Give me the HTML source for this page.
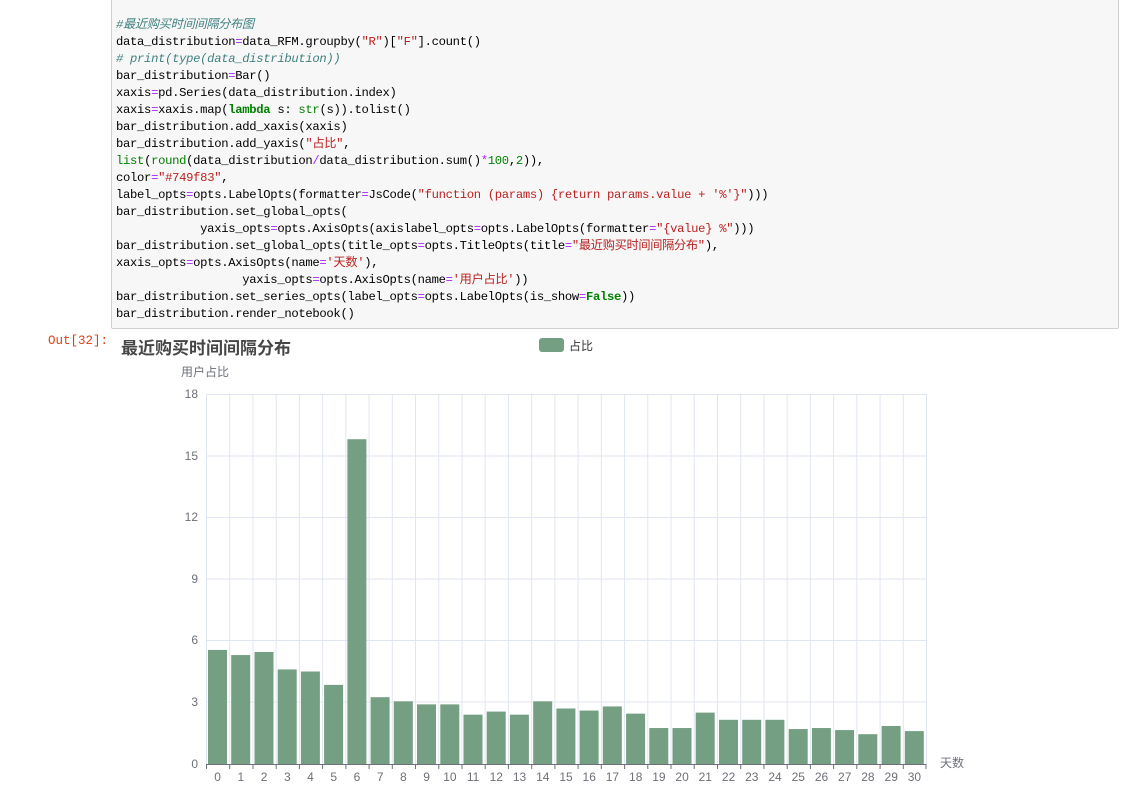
<!DOCTYPE html>
<html><head><meta charset="utf-8"><style>
html,body{margin:0;padding:0;background:#fff;width:1138px;height:807px;overflow:hidden}
.cell{position:absolute;left:111px;top:-1px;width:1006px;height:328px;background:#f7f7f7;border:1px solid #cfcfcf;border-radius:2px}
pre{position:absolute;left:116px;top:17px;margin:0;font-family:"Liberation Mono","Noto Sans CJK SC",monospace;font-size:12.2px;line-height:17px;color:#000;letter-spacing:-0.3px}
.c{color:#408080;font-style:italic}.s{color:#ba2121}.k{color:#008000;font-weight:bold}.o{color:#aa22ff}.n{color:#008000}
.out{position:absolute;left:48px;top:334px;font-family:"Liberation Mono",monospace;font-size:12.5px;color:#d84315}
svg{position:absolute;left:0;top:0}
</style></head><body>
<div class="cell"></div>
<pre><span class="c">#最近购买时间间隔分布图</span>
data_distribution<span class="o">=</span>data_RFM.groupby(<span class="s">"R"</span>)[<span class="s">"F"</span>].count()
<span class="c"># print(type(data_distribution))</span>
bar_distribution<span class="o">=</span>Bar()
xaxis<span class="o">=</span>pd.Series(data_distribution.index)
xaxis<span class="o">=</span>xaxis.map(<span class="k">lambda</span> s: <span class="n">str</span>(s)).tolist()
bar_distribution.add_xaxis(xaxis)
bar_distribution.add_yaxis(<span class="s">"占比"</span>,
<span class="n">list</span>(<span class="n">round</span>(data_distribution<span class="o">/</span>data_distribution.sum()<span class="o">*</span><span class="n">100</span>,<span class="n">2</span>)),
color<span class="o">=</span><span class="s">"#749f83"</span>,
label_opts<span class="o">=</span>opts.LabelOpts(formatter<span class="o">=</span>JsCode(<span class="s">"function (params) {return params.value + '%'}"</span>)))
bar_distribution.set_global_opts(
            yaxis_opts<span class="o">=</span>opts.AxisOpts(axislabel_opts<span class="o">=</span>opts.LabelOpts(formatter<span class="o">=</span><span class="s">"{value} %"</span>)))
bar_distribution.set_global_opts(title_opts<span class="o">=</span>opts.TitleOpts(title<span class="o">=</span><span class="s">"最近购买时间间隔分布"</span>),
xaxis_opts<span class="o">=</span>opts.AxisOpts(name<span class="o">=</span><span class="s">'天数'</span>),
                  yaxis_opts<span class="o">=</span>opts.AxisOpts(name<span class="o">=</span><span class="s">'用户占比'</span>))
bar_distribution.set_series_opts(label_opts<span class="o">=</span>opts.LabelOpts(is_show<span class="o">=</span><span class="k">False</span>))
bar_distribution.render_notebook()</pre>
<div class="out">Out[32]:</div>
<svg width="1138" height="807" font-family="Liberation Sans,Noto Sans CJK SC,sans-serif">
<defs><pattern id="vg" x="206" y="0" width="23.226" height="807" patternUnits="userSpaceOnUse"><line x1="0.5" y1="0" x2="0.5" y2="807" stroke="#e0e6f1" stroke-width="1"/></pattern></defs>
<text x="121" y="354" font-size="17" font-weight="bold" fill="#464646">最近购买时间间隔分布</text>
<rect x="539" y="338" width="25" height="14" rx="3" fill="#749f83"/>
<text x="569" y="350" font-size="12" fill="#333">占比</text>
<text x="181" y="376" font-size="12" fill="#6e7079">用户占比</text>
<text x="940" y="767" font-size="12" fill="#6e7079">天数</text>
<rect x="206" y="394" width="721" height="370" fill="url(#vg)"/>
<g stroke="#e0e6f1" stroke-width="1">
<line x1="206" y1="394.5" x2="926" y2="394.5"/><line x1="206" y1="456" x2="926" y2="456"/><line x1="206" y1="517.5" x2="926" y2="517.5"/><line x1="206" y1="579" x2="926" y2="579"/><line x1="206" y1="640.5" x2="926" y2="640.5"/><line x1="206" y1="702" x2="926" y2="702"/>
</g>
<g font-size="12" fill="#6e7079" text-anchor="end">
<text x="198" y="398">18</text><text x="198" y="460">15</text><text x="198" y="521">12</text><text x="198" y="583">9</text><text x="198" y="644">6</text><text x="198" y="706">3</text><text x="198" y="768">0</text>
</g>
<g transform="translate(0,764) scale(1,-20.556)" fill="#749f83">
<rect x="208" y="0" width="19" height="5.55"/><rect x="231.2" y="0" width="19" height="5.3"/><rect x="254.5" y="0" width="19" height="5.45"/><rect x="277.7" y="0" width="19" height="4.6"/><rect x="300.9" y="0" width="19" height="4.5"/><rect x="324.1" y="0" width="19" height="3.85"/><rect x="347.4" y="0" width="19" height="15.8"/><rect x="370.6" y="0" width="19" height="3.25"/><rect x="393.8" y="0" width="19" height="3.05"/><rect x="417" y="0" width="19" height="2.9"/><rect x="440.3" y="0" width="19" height="2.9"/><rect x="463.5" y="0" width="19" height="2.4"/><rect x="486.7" y="0" width="19" height="2.55"/><rect x="509.9" y="0" width="19" height="2.4"/><rect x="533.2" y="0" width="19" height="3.05"/><rect x="556.4" y="0" width="19" height="2.7"/><rect x="579.6" y="0" width="19" height="2.6"/><rect x="602.8" y="0" width="19" height="2.8"/><rect x="626.1" y="0" width="19" height="2.45"/><rect x="649.3" y="0" width="19" height="1.75"/><rect x="672.5" y="0" width="19" height="1.75"/><rect x="695.7" y="0" width="19" height="2.5"/><rect x="719" y="0" width="19" height="2.15"/><rect x="742.2" y="0" width="19" height="2.15"/><rect x="765.4" y="0" width="19" height="2.15"/><rect x="788.7" y="0" width="19" height="1.7"/><rect x="811.9" y="0" width="19" height="1.75"/><rect x="835.1" y="0" width="19" height="1.65"/><rect x="858.3" y="0" width="19" height="1.45"/><rect x="881.6" y="0" width="19" height="1.85"/><rect x="904.8" y="0" width="19" height="1.6"/>
</g>
<line x1="206" y1="764.5" x2="926" y2="764.5" stroke="#6e7079" stroke-width="1"/>
<g stroke="#6e7079"><line x1="206.5" y1="764" x2="206.5" y2="769"/><line x1="229.7" y1="764" x2="229.7" y2="769"/><line x1="253" y1="764" x2="253" y2="769"/><line x1="276.2" y1="764" x2="276.2" y2="769"/><line x1="299.4" y1="764" x2="299.4" y2="769"/><line x1="322.6" y1="764" x2="322.6" y2="769"/><line x1="345.9" y1="764" x2="345.9" y2="769"/><line x1="369.1" y1="764" x2="369.1" y2="769"/><line x1="392.3" y1="764" x2="392.3" y2="769"/><line x1="415.5" y1="764" x2="415.5" y2="769"/><line x1="438.8" y1="764" x2="438.8" y2="769"/><line x1="462" y1="764" x2="462" y2="769"/><line x1="485.2" y1="764" x2="485.2" y2="769"/><line x1="508.4" y1="764" x2="508.4" y2="769"/><line x1="531.7" y1="764" x2="531.7" y2="769"/><line x1="554.9" y1="764" x2="554.9" y2="769"/><line x1="578.1" y1="764" x2="578.1" y2="769"/><line x1="601.3" y1="764" x2="601.3" y2="769"/><line x1="624.6" y1="764" x2="624.6" y2="769"/><line x1="647.8" y1="764" x2="647.8" y2="769"/><line x1="671" y1="764" x2="671" y2="769"/><line x1="694.2" y1="764" x2="694.2" y2="769"/><line x1="717.5" y1="764" x2="717.5" y2="769"/><line x1="740.7" y1="764" x2="740.7" y2="769"/><line x1="763.9" y1="764" x2="763.9" y2="769"/><line x1="787.2" y1="764" x2="787.2" y2="769"/><line x1="810.4" y1="764" x2="810.4" y2="769"/><line x1="833.6" y1="764" x2="833.6" y2="769"/><line x1="856.8" y1="764" x2="856.8" y2="769"/><line x1="880.1" y1="764" x2="880.1" y2="769"/><line x1="903.3" y1="764" x2="903.3" y2="769"/><line x1="926" y1="764" x2="926" y2="769"/></g>
<g font-size="12" fill="#6e7079" text-anchor="middle">
<text x="217.6" y="781">0</text><text x="240.8" y="781">1</text><text x="264.1" y="781">2</text><text x="287.3" y="781">3</text><text x="310.5" y="781">4</text><text x="333.7" y="781">5</text><text x="357" y="781">6</text><text x="380.2" y="781">7</text><text x="403.4" y="781">8</text><text x="426.6" y="781">9</text><text x="449.9" y="781">10</text><text x="473.1" y="781">11</text><text x="496.3" y="781">12</text><text x="519.5" y="781">13</text><text x="542.8" y="781">14</text><text x="566" y="781">15</text><text x="589.2" y="781">16</text><text x="612.4" y="781">17</text><text x="635.7" y="781">18</text><text x="658.9" y="781">19</text><text x="682.1" y="781">20</text><text x="705.3" y="781">21</text><text x="728.6" y="781">22</text><text x="751.8" y="781">23</text><text x="775" y="781">24</text><text x="798.3" y="781">25</text><text x="821.5" y="781">26</text><text x="844.7" y="781">27</text><text x="867.9" y="781">28</text><text x="891.2" y="781">29</text><text x="914.4" y="781">30</text>
</g>
</svg>
</body></html>
